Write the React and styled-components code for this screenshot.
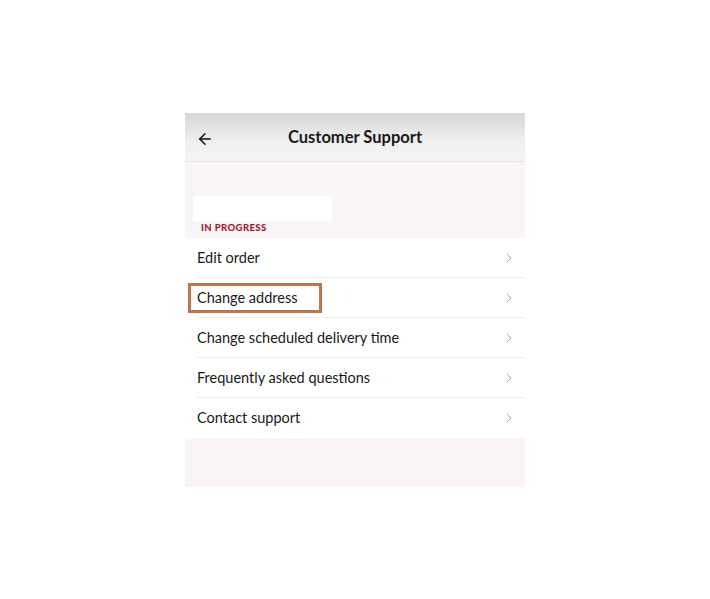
import styled, { createGlobalStyle } from "styled-components";
import { ArrowLeft, ChevronRight } from "lucide-react";

const GlobalStyle = createGlobalStyle`
  body {
    margin: 0;
    background: #ffffff;
    font-family: Lato, "Open Sans", sans-serif;
  }
`;

const Page = styled.div`
  display: flex;
  justify-content: center;
  padding-top: 113px;
  height: 599px;
  box-sizing: border-box;
`;

const Phone = styled.div`
  width: 340px;
  height: 374px;
  background: #f9f5f7;
  display: flex;
  flex-direction: column;
`;

const Header = styled.header`
  height: 48px;
  display: grid;
  grid-template-columns: 40px 1fr 40px;
  align-items: center;
  background: linear-gradient(#d7d7d7, #eeeeee 55%, #f5f5f5);
  border-bottom: 1px solid #e6e4e5;
`;

const BackButton = styled.button`
  border: none;
  background: none;
  padding: 4px 0 0 11px;
  display: flex;
  align-items: center;
  color: #111;
`;

const Title = styled.h1`
  margin: 0;
  text-align: center;
  font-size: 16.5px;
  font-weight: 700;
  color: #1a1a1a;
`;

const Redacted = styled.div`
  width: 139px;
  height: 25px;
  background: #ffffff;
  margin: 34px 0 0 8px;
`;

const SectionLabel = styled.div`
  font-size: 9.5px;
  font-weight: 900;
  color: #9a1f2f;
  letter-spacing: 0.4px;
  padding: 1px 0 0 16px;
  height: 13px;
`;

const List = styled.ul`
  list-style: none;
  margin: 3px 0 0;
  padding: 0;
  background: #ffffff;
`;

const Row = styled.li`
  height: 40px;
  display: flex;
  align-items: center;
  justify-content: space-between;
  margin-left: 12px;
  padding-right: 8px;
  border-bottom: ${(p) => (p.$last ? "none" : "1px solid #eeeced")};
  box-sizing: border-box;
`;

const Label = styled.span`
  font-size: 14.5px;
  color: #181818;
  padding: 3px 21px 4px 6px;
  margin-left: -9px;
  border: 3px solid ${(p) => (p.$highlight ? "#b97652" : "transparent")};
`;

const Chevron = styled(ChevronRight)`
  color: #a9a9a9;
`;

const items = [
  "Edit order",
  "Change address",
  "Change scheduled delivery time",
  "Frequently asked questions",
  "Contact support",
];

export default function App() {
  return (
    <>
      <GlobalStyle />
      <Page>
        <Phone>
          <Header>
            <BackButton>
              <ArrowLeft size={18} strokeWidth={2} />
            </BackButton>
            <Title>Customer Support</Title>
            <span />
          </Header>
          <Redacted />
          <SectionLabel>IN PROGRESS</SectionLabel>
          <List>
            {items.map((item, i) => (
              <Row key={item} $last={i === items.length - 1}>
                <Label $highlight={item === "Change address"}>{item}</Label>
                <Chevron size={16} strokeWidth={1.5} />
              </Row>
            ))}
          </List>
        </Phone>
      </Page>
    </>
  );
}
